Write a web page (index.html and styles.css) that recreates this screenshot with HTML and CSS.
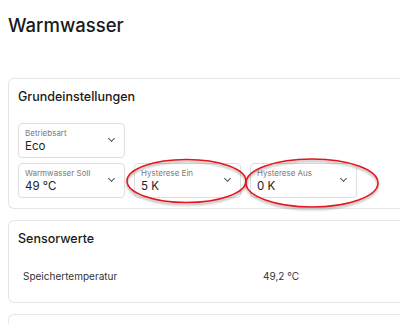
FILE: index.html
```html
<!DOCTYPE html>
<html lang="de">
<head>
    <meta charset="UTF-8">
    <meta name="viewport" content="width=device-width, initial-scale=1.0">
    <title>Warmwasser</title>
    <link rel="stylesheet" href="styles.css">
</head>
<body>

    <h1>Warmwasser</h1>

    <!-- Grundeinstellungen -->
    <div class="card card-settings">
        <h2>Grundeinstellungen</h2>
        <div class="field-grid">
            <div class="field">
                <span class="field-label">Betriebsart</span>
                <span class="field-value">Eco</span>
                <span class="chevron"></span>
            </div>
            <div class="field-break"></div>
            <div class="field">
                <span class="field-label">Warmwasser Soll</span>
                <span class="field-value">49 °C</span>
                <span class="chevron"></span>
            </div>
            <div class="field">
                <span class="field-label">Hysterese Ein</span>
                <span class="field-value">5 K</span>
                <span class="chevron"></span>
            </div>
            <div class="field">
                <span class="field-label">Hysterese Aus</span>
                <span class="field-value">0 K</span>
                <span class="chevron"></span>
            </div>
        </div>
    </div>

    <!-- Sensorwerte -->
    <div class="card card-sensors">
        <h2>Sensorwerte</h2>
        <div class="sensor-row">
            <span class="sensor-name">Speichertemperatur</span>
            <span class="sensor-value">49,2 °C</span>
        </div>
    </div>

    <div class="card card-more"></div>

    <!-- red marks drawn over the screenshot -->
    <svg class="marks" width="400" height="324" viewBox="0 0 400 324">
        <defs>
            <filter id="shade" x="-20%" y="-20%" width="140%" height="160%">
                <feDropShadow dx="0" dy="2" stdDeviation="1.2" flood-color="#000" flood-opacity="0.35"/>
            </filter>
        </defs>
        <ellipse cx="186.5" cy="181" rx="59.5" ry="21.5" filter="url(#shade)"/>
        <ellipse cx="312" cy="183" rx="66" ry="24" filter="url(#shade)"/>
    </svg>

</body>
</html>
```

FILE: styles.css
```css
body {
    font-family: Inter, "Noto Sans", sans-serif;
    background-color: #ffffff;
    color: #1a1a1a;
    margin: 0;
    padding: 0 0 0 8px;
    overflow: hidden;
    position: relative;
    height: 324px;
    box-sizing: border-box;
}
h1 {
    font-size: 18.5px;
    font-weight: 500;
    margin: 0;
    padding-top: 13px;
    line-height: 24px;
    height: 65px;
}
/* cards run on past the right edge, so no right border */
.card {
    border: 1px solid #e6e6e6;
    border-right: none;
    border-radius: 6px 0 0 6px;
    box-sizing: border-box;
    margin-bottom: 11px;
    padding: 0 9px;
}
.card h2 {
    font-size: 12.5px;
    font-weight: 500;
    margin: 0;
    line-height: 16px;
}
.card-settings {
    height: 131px;
    padding-top: 10px;
}
.field-grid {
    display: grid;
    grid-template-columns: repeat(3, 107px);
    column-gap: 9px;
    row-gap: 5px;
    margin-top: 18px;
}
.field-break {
    grid-column: span 2;
}
.field {
    position: relative;
    height: 35px;
    border: 1px solid #dedede;
    border-radius: 4px;
    box-sizing: border-box;
    padding: 4px 0 0 6px;
    display: flex;
    flex-direction: column;
}
.field-label {
    font-size: 8px;
    color: #7a7a7a;
    line-height: 10px;
}
.field-value {
    font-size: 11.5px;
    color: #222;
    line-height: 14px;
    margin-top: 1px;
}
.chevron {
    position: absolute;
    right: 10px;
    top: 12px;
    width: 4px;
    height: 4px;
    border-right: 1.3px solid #555;
    border-bottom: 1.3px solid #555;
    transform: rotate(45deg);
}
.card-sensors {
    height: 83px;
    padding-top: 10px;
}
.sensor-row {
    display: flex;
    margin-top: 23px;
    padding-left: 5px;
    font-size: 10px;
    line-height: 12px;
    color: #333;
}
.sensor-name {
    width: 240px;
}
.card-more {
    height: 10px;
    margin-bottom: 0;
    border-bottom: none;
    border-radius: 6px 0 0 0;
}
.marks {
    position: absolute;
    top: 0;
    left: 0;
    pointer-events: none;
}
.marks ellipse {
    fill: none;
    stroke: #e3141b;
    stroke-width: 1.5;
}
```
